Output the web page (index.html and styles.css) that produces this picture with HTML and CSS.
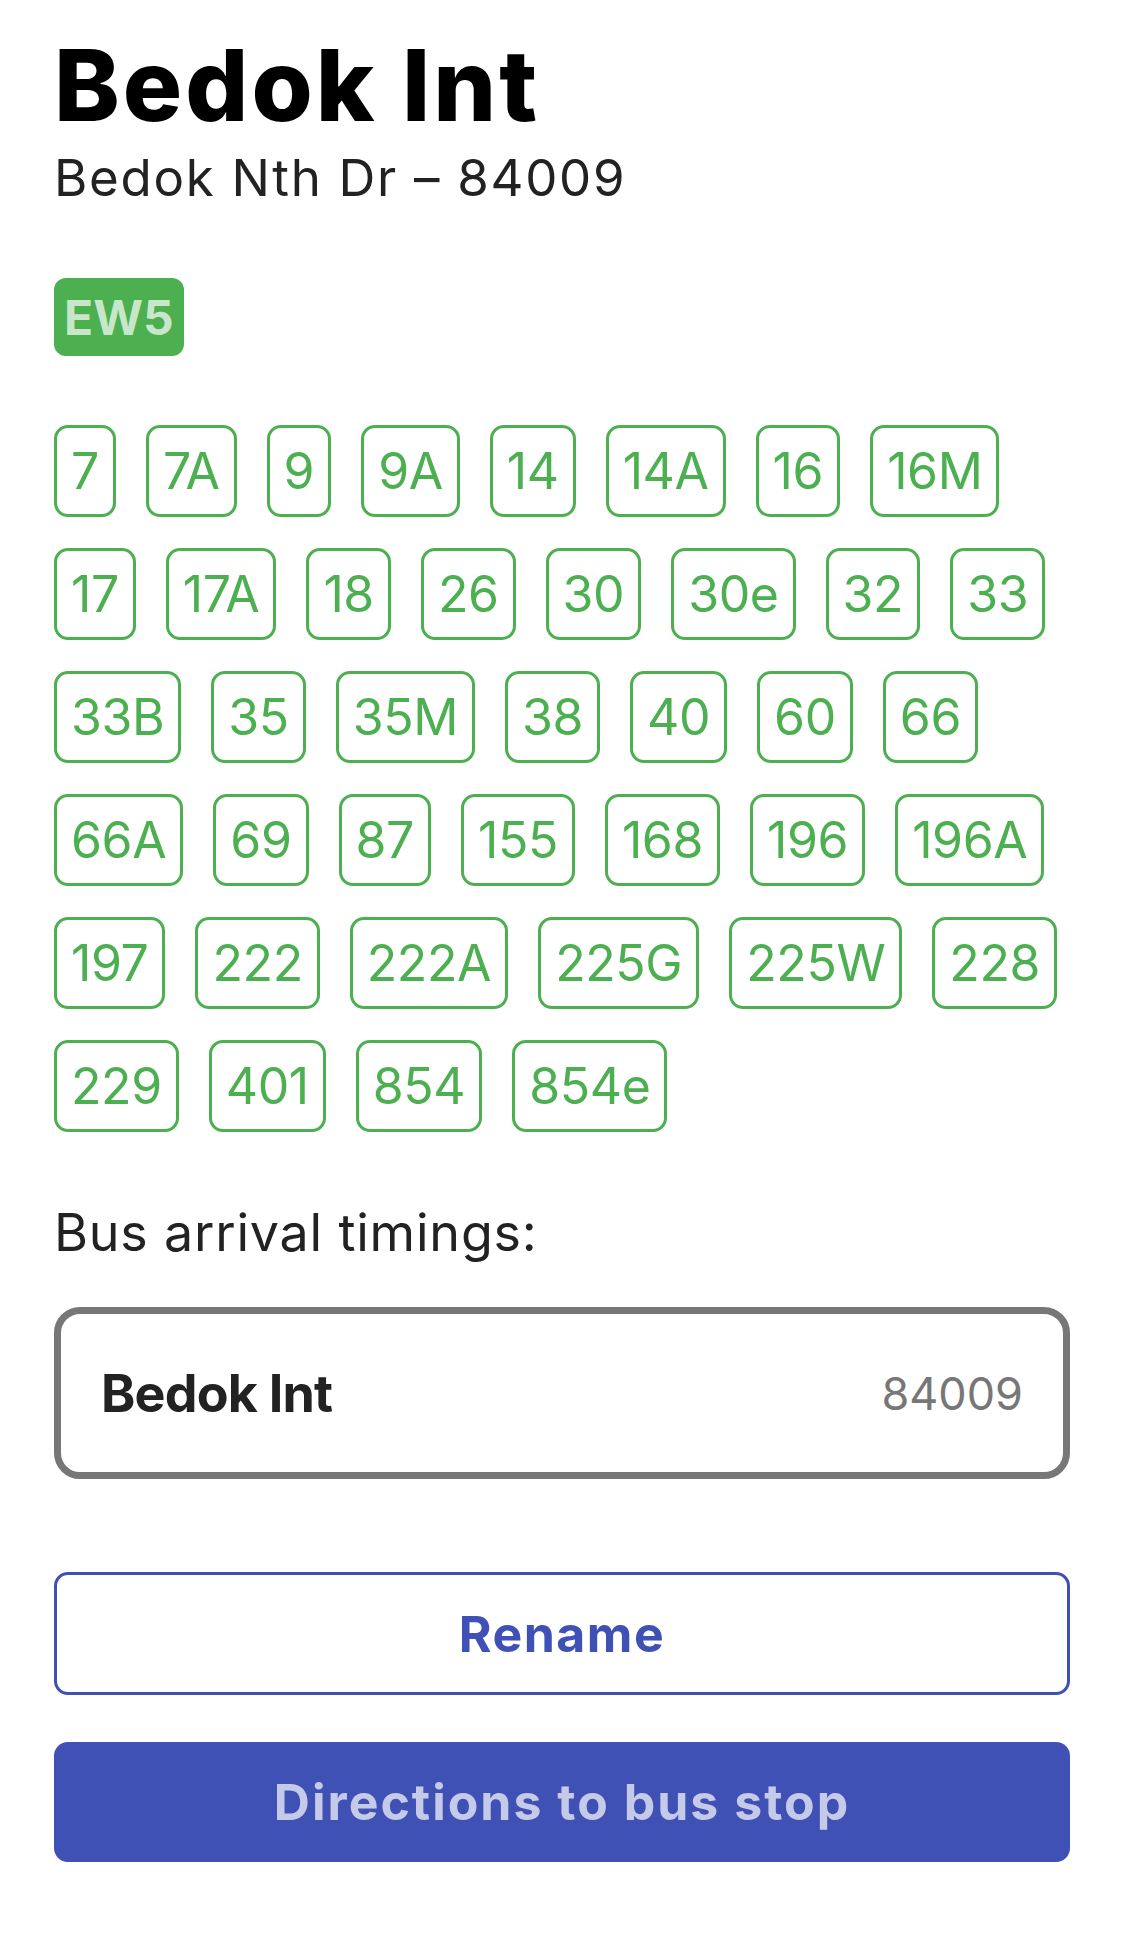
FILE: index.html
```html
<!DOCTYPE html>
<html lang="en">
<head>
<meta charset="utf-8">
<title>Bedok Int</title>
<link rel="stylesheet" href="styles.css">
</head>
<body>
<main class="page">
  <h1 class="title">Bedok Int</h1>
  <p class="subtitle">Bedok Nth Dr – 84009</p>

  <div class="stations">
    <span class="station">EW5</span>
  </div>

  <ul class="routes">
    <li class="route">7</li>
    <li class="route">7A</li>
    <li class="route">9</li>
    <li class="route">9A</li>
    <li class="route">14</li>
    <li class="route">14A</li>
    <li class="route">16</li>
    <li class="route">16M</li>
    <li class="route">17</li>
    <li class="route">17A</li>
    <li class="route">18</li>
    <li class="route">26</li>
    <li class="route">30</li>
    <li class="route">30e</li>
    <li class="route">32</li>
    <li class="route">33</li>
    <li class="route">33B</li>
    <li class="route">35</li>
    <li class="route">35M</li>
    <li class="route">38</li>
    <li class="route">40</li>
    <li class="route">60</li>
    <li class="route">66</li>
    <li class="route">66A</li>
    <li class="route">69</li>
    <li class="route">87</li>
    <li class="route">155</li>
    <li class="route">168</li>
    <li class="route">196</li>
    <li class="route">196A</li>
    <li class="route">197</li>
    <li class="route">222</li>
    <li class="route">222A</li>
    <li class="route">225G</li>
    <li class="route">225W</li>
    <li class="route">228</li>
    <li class="route">229</li>
    <li class="route">401</li>
    <li class="route">854</li>
    <li class="route">854e</li>
  </ul>

  <p class="section-label">Bus arrival timings:</p>

  <div class="stop-card">
    <span class="stop-name">Bedok Int</span>
    <span class="stop-code">84009</span>
  </div>

  <button class="btn btn-outline" type="button">Rename</button>
  <button class="btn btn-solid" type="button">Directions to bus stop</button>
</main>
</body>
</html>
```

FILE: styles.css
```css
* {
  box-sizing: border-box;
}

html, body {
  margin: 0;
  padding: 0;
  background: #ffffff;
}

body {
  font-family: Inter, "Noto Sans", "Liberation Sans", sans-serif;
  color: #222222;
}

.page {
  padding: 36px 55px 40px 54px;
  display: flex;
  flex-direction: column;
  align-items: stretch;
}

.title {
  margin: 0;
  font-size: 99px;
  line-height: 99px;
  font-weight: 800;
  color: #000000;
  letter-spacing: 3px;
}

.subtitle {
  margin: 13px 0 0;
  font-size: 51px;
  line-height: 60px;
  font-weight: 400;
  color: #222222;
  letter-spacing: 1.7px;
}

.stations {
  margin-top: 70px;
  display: flex;
}

.station {
  height: 78px;
  padding: 0 10px;
  display: inline-flex;
  align-items: center;
  background: #4caf50;
  color: #c8e6c9;
  font-size: 48px;
  font-weight: 700;
  border-radius: 12px;
}

.routes {
  list-style: none;
  margin: 69px 0 0;
  padding: 0;
  display: flex;
  flex-wrap: wrap;
  column-gap: 30px;
  row-gap: 31px;
}

.route {
  height: 92px;
  padding: 0 14px;
  display: flex;
  align-items: center;
  border: 3px solid #4caf50;
  border-radius: 14px;
  color: #4caf50;
  font-size: 50px;
  font-weight: 400;
  letter-spacing: -0.4px;
}

.section-label {
  margin: 71px 0 0;
  font-size: 52px;
  line-height: 60px;
  font-weight: 400;
  color: #222222;
  letter-spacing: 0.8px;
}

.stop-card {
  margin-top: 44px;
  height: 172px;
  padding: 0 40px 0 40px;
  display: flex;
  align-items: center;
  justify-content: space-between;
  border: 7px solid #777777;
  border-radius: 26px;
}

.stop-name {
  font-size: 52px;
  font-weight: 700;
  color: #222222;
  letter-spacing: -0.8px;
}

.stop-code {
  font-size: 45px;
  font-weight: 400;
  color: #777777;
}

.btn {
  display: flex;
  align-items: center;
  justify-content: center;
  width: 100%;
  font-family: Inter, "Noto Sans", "Liberation Sans", sans-serif;
  font-size: 50px;
  font-weight: 700;
  letter-spacing: 1.5px;
  border-radius: 14px;
  cursor: pointer;
}

.btn-outline {
  margin-top: 93px;
  height: 123px;
  background: #ffffff;
  border: 3px solid #3f51b5;
  color: #3f51b5;
}

.btn-solid {
  margin-top: 47px;
  height: 120px;
  background: #3f51b5;
  border: none;
  color: #c5cae9;
  letter-spacing: 2px;
}
```
